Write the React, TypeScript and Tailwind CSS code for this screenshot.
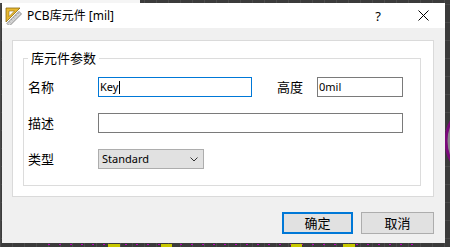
import React from "react";

function Canvas() {
  const ticks: number[] = [];
  for (let x = 48; x < 420; x += 11) ticks.push(x);
  const vlines: number[] = [];
  for (let x = 0; x < 450; x += 12) vlines.push(x);
  const hlines: number[] = [];
  for (let y = 4; y < 247; y += 18) hlines.push(y);
  return (
    <svg className="absolute inset-0" width="450" height="247" viewBox="0 0 450 247">
      <rect x="0" y="0" width="450" height="247" fill="#3b3b3b" />
      {vlines.map((x) => (
        <line key={"v" + x} x1={x + 0.5} y1="0" x2={x + 0.5} y2="247" stroke="#4a4a4a" strokeWidth="1" />
      ))}
      {hlines.map((y) => (
        <line key={"h" + y} x1="0" y1={y + 0.5} x2="450" y2={y + 0.5} stroke="#4a4a4a" strokeWidth="1" />
      ))}
      <rect x="0" y="0" width="140" height="3" fill="#f5f5f5" />
      {ticks.map((x) => (
        <rect key={"t" + x} x={x} y="244" width="2" height="1" fill="#c000c0" />
      ))}
      <rect x="108" y="244" width="12" height="3" fill="#c8c800" />
      <rect x="161" y="244" width="11" height="3" fill="#c8c800" />
      <rect x="291" y="244" width="11" height="3" fill="#c8c800" />
      <rect x="343" y="244" width="12" height="3" fill="#c8c800" />
      <ellipse cx="478" cy="141" rx="32" ry="36" fill="#8a8a8a" stroke="#7a0a7a" strokeWidth="3" />
    </svg>
  );
}

function RulerIcon() {
  return (
    <svg width="17" height="19" viewBox="0 0 17 19">
      <polygon points="1,2 15,2 1,16" fill="#e8b830" stroke="#8a6a10" strokeWidth="0.8" />
      <polygon points="4,5 9.5,5 4,10.5" fill="#ffffff" stroke="#8a6a10" strokeWidth="0.6" />
      <g transform="rotate(-45 9 12.5)">
        <rect x="0.5" y="11" width="17" height="3.6" fill="#d4d4d4" stroke="#707070" strokeWidth="0.7" />
        <line x1="3.5" y1="11" x2="3.5" y2="12.6" stroke="#707070" strokeWidth="0.5" />
        <line x1="6.5" y1="11" x2="6.5" y2="12.6" stroke="#707070" strokeWidth="0.5" />
        <line x1="9.5" y1="11" x2="9.5" y2="12.6" stroke="#707070" strokeWidth="0.5" />
        <line x1="12.5" y1="11" x2="12.5" y2="12.6" stroke="#707070" strokeWidth="0.5" />
        <line x1="15.5" y1="11" x2="15.5" y2="12.6" stroke="#707070" strokeWidth="0.5" />
      </g>
    </svg>
  );
}

function CloseIcon() {
  return (
    <svg width="11" height="11" viewBox="0 0 11 11">
      <line x1="0.5" y1="0.5" x2="10.5" y2="10.5" stroke="#000" strokeWidth="1" />
      <line x1="10.5" y1="0.5" x2="0.5" y2="10.5" stroke="#000" strokeWidth="1" />
    </svg>
  );
}

function Chevron() {
  return (
    <svg width="8" height="5" viewBox="0 0 8 5">
      <polyline points="0.5,0.5 4,4 7.5,0.5" fill="none" stroke="#333" strokeWidth="1" />
    </svg>
  );
}

export default function App() {
  return (
    <div className="relative w-[450px] h-[247px] overflow-hidden bg-[#3b3b3b]">
      <Canvas />
      <div className="relative ml-[2px] mt-[3px] w-[443px] h-[240px] flex flex-col bg-[#f0f0f0] text-black font-['Noto_Sans','Noto_Sans_CJK_SC',sans-serif]">
        {/* Title bar */}
        <div className="h-[25px] bg-white flex items-center pl-[3px]">
          <RulerIcon />
          <span className="ml-[5px] text-[12px] leading-[16px]">PCB库元件 [mil]</span>
          <span className="ml-auto text-[13px] leading-[16px]">?</span>
          <span className="ml-[37px] mr-[16px] flex items-center">
            <CloseIcon />
          </span>
        </div>

        {/* Body */}
        <div className="flex-1 flex flex-col pl-[10px] pt-[12px]">
          <div className="w-[422px] h-[157px] border border-[#dadada] bg-white pl-[10px] pt-[9px]">
            <fieldset className="w-[398px] h-[136px] border border-[#dcdcdc] px-[4px]">
              <legend className="px-[3px] text-[13px] leading-[16px]">库元件参数</legend>
              <div className="flex flex-col gap-[16px] pt-[11px]">
                <div className="flex items-center h-[20px]">
                  <span className="w-[70px] text-[13px] leading-[16px]">名称</span>
                  <div className="w-[154px] h-[20px] border border-[#0078d7] bg-white pl-[1px] flex items-center text-[11px] leading-[14px]">
                    <span>Key</span>
                    <span className="inline-block w-px h-[13px] bg-black ml-[1px]" />
                  </div>
                  <span className="ml-[25px] w-[40px] text-[13px] leading-[16px]">高度</span>
                  <div className="w-[86px] h-[20px] border border-[#7a7a7a] bg-white pl-[1px] flex items-center text-[11px] leading-[14px]">
                    0mil
                  </div>
                </div>
                <div className="flex items-center h-[20px]">
                  <span className="w-[70px] text-[13px] leading-[16px]">描述</span>
                  <div className="w-[305px] h-[20px] border border-[#7a7a7a] bg-white" />
                </div>
                <div className="flex items-center h-[20px]">
                  <span className="w-[70px] text-[13px] leading-[16px]">类型</span>
                  <div className="w-[106px] h-[20px] border border-[#adadad] bg-[#e1e1e1] pl-[3px] pr-[5px] flex items-center justify-between text-[11px] leading-[14px]">
                    <span>Standard</span>
                    <Chevron />
                  </div>
                </div>
              </div>
            </fieldset>
          </div>

          <div className="w-[422px] mt-[15px] flex justify-end gap-[8px]">
            <div className="w-[71px] h-[22px] border-2 border-[#0078d7] bg-[#e1e1e1] flex items-center justify-center text-[13px] leading-[16px]">
              确定
            </div>
            <div className="w-[73px] h-[22px] border border-[#adadad] bg-[#e1e1e1] flex items-center justify-center text-[13px] leading-[16px]">
              取消
            </div>
          </div>
        </div>
      </div>
    </div>
  );
}
